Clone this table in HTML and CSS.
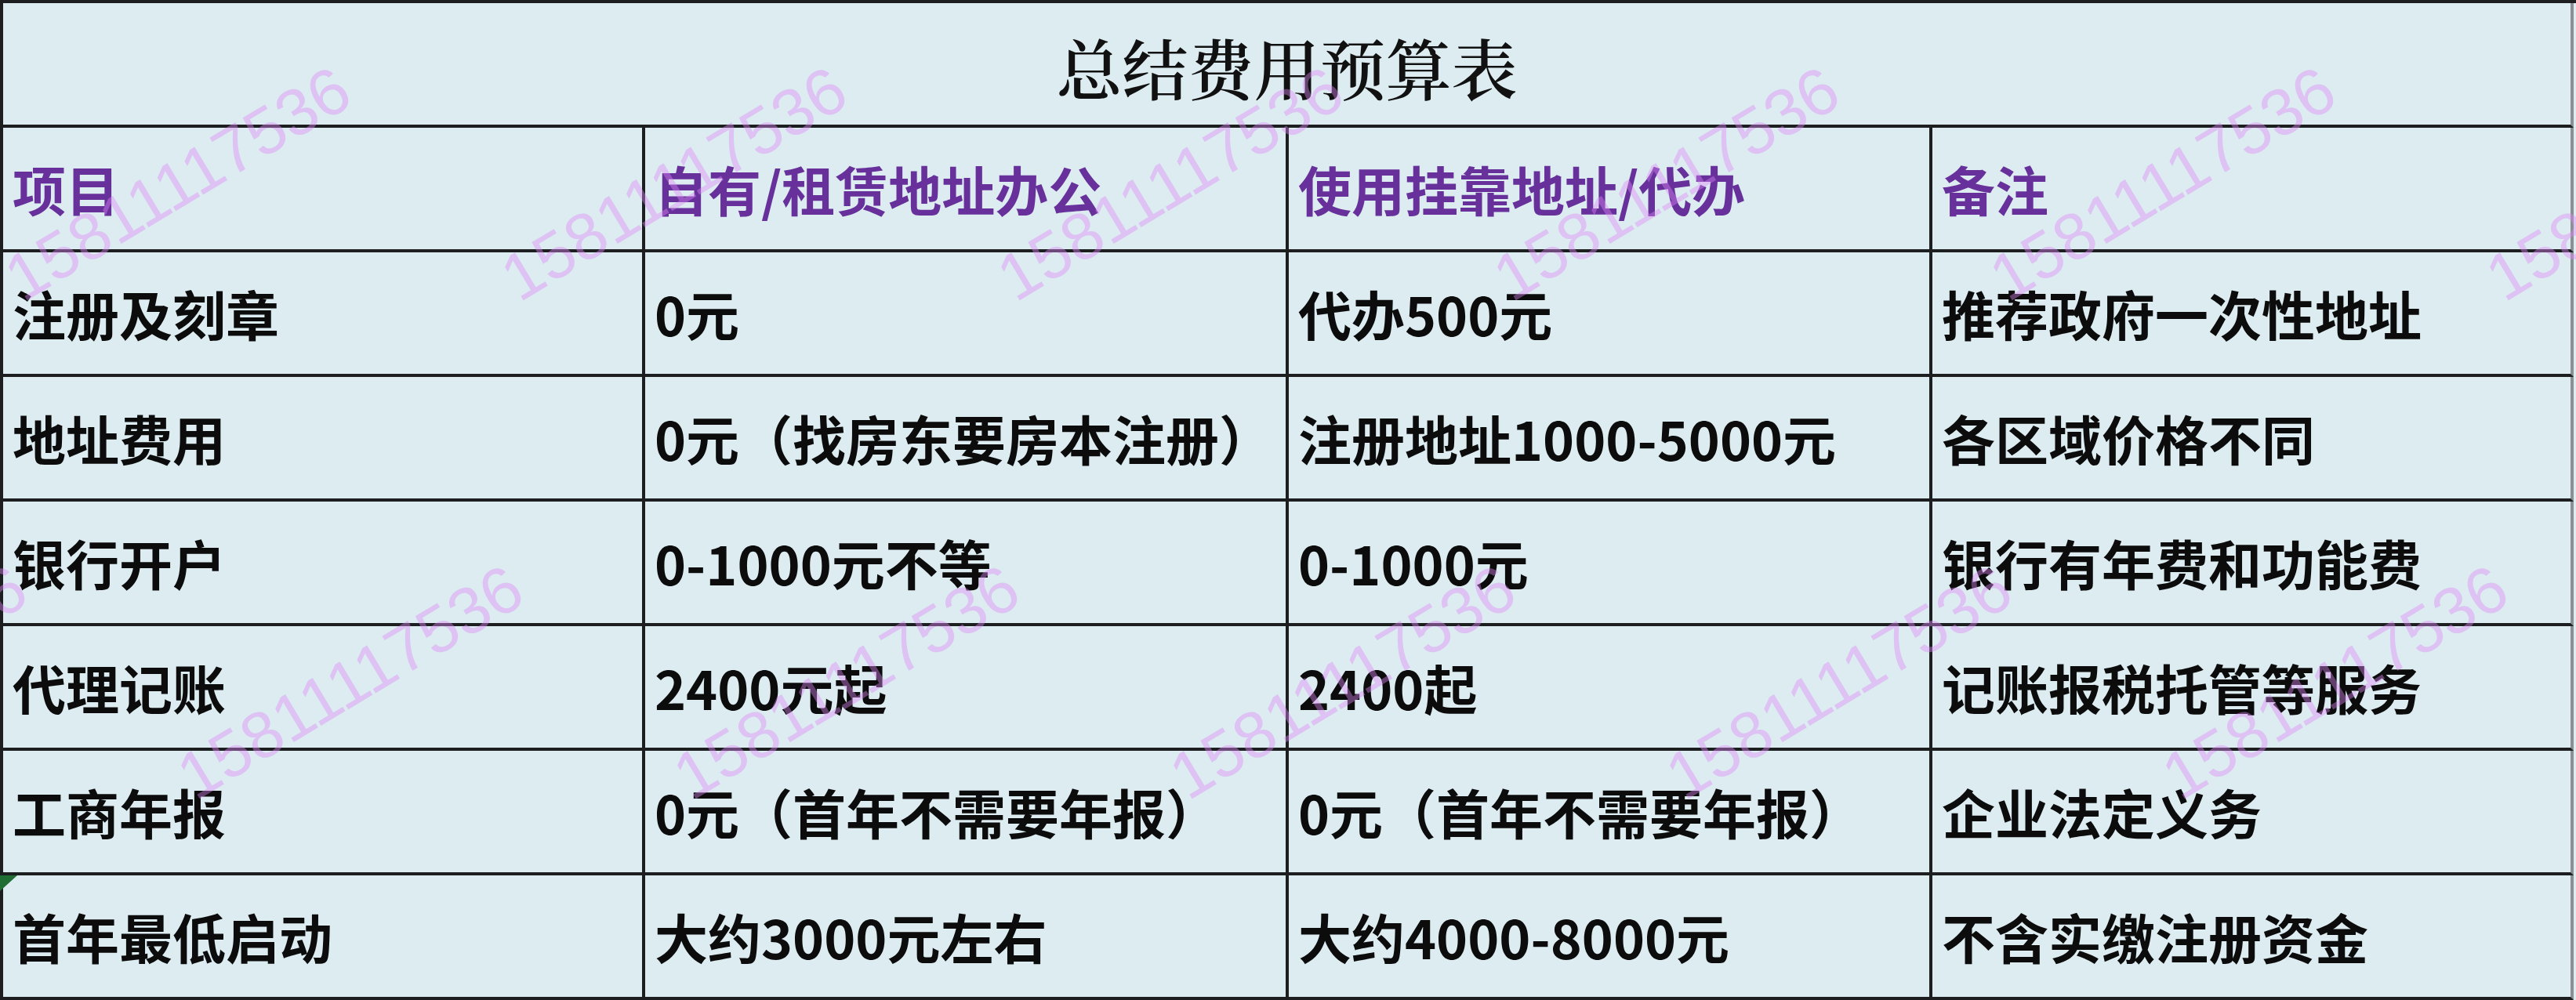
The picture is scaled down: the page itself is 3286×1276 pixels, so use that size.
FILE: index.html
```html
<!DOCTYPE html>
<html lang="zh-CN">
<head>
<meta charset="utf-8">
<title>总结费用预算表</title>
<link rel="stylesheet" href="styles.css">
</head>
<body>
<div class="page">
  <div class="sheet">
    <div class="title">总结费用预算表</div>

    <div class="cell head">项目</div>
    <div class="cell head">自有/租赁地址办公</div>
    <div class="cell head">使用挂靠地址/代办</div>
    <div class="cell head last">备注</div>

    <div class="cell">注册及刻章</div>
    <div class="cell">0元</div>
    <div class="cell">代办500元</div>
    <div class="cell last">推荐政府一次性地址</div>

    <div class="cell">地址费用</div>
    <div class="cell">0元（找房东要房本注册）</div>
    <div class="cell">注册地址1000-5000元</div>
    <div class="cell last">各区域价格不同</div>

    <div class="cell">银行开户</div>
    <div class="cell">0-1000元不等</div>
    <div class="cell">0-1000元</div>
    <div class="cell last">银行有年费和功能费</div>

    <div class="cell">代理记账</div>
    <div class="cell">2400元起</div>
    <div class="cell">2400起</div>
    <div class="cell last">记账报税托管等服务</div>

    <div class="cell">工商年报</div>
    <div class="cell">0元（首年不需要年报）</div>
    <div class="cell">0元（首年不需要年报）</div>
    <div class="cell last">企业法定义务</div>

    <div class="cell flagged">首年最低启动</div>
    <div class="cell">大约3000元左右</div>
    <div class="cell">大约4000-8000元</div>
    <div class="cell last">不含实缴注册资金</div>
  </div>

  <div class="watermarks" aria-hidden="true">
    <div class="wm-row row-a">
      <span class="wm">15811117536</span>
      <span class="wm">15811117536</span>
      <span class="wm">15811117536</span>
      <span class="wm">15811117536</span>
      <span class="wm">15811117536</span>
      <span class="wm">15811117536</span>
    </div>
    <div class="wm-row row-b">
      <span class="wm">15811117536</span>
      <span class="wm">15811117536</span>
      <span class="wm">15811117536</span>
      <span class="wm">15811117536</span>
      <span class="wm">15811117536</span>
      <span class="wm">15811117536</span>
      <span class="wm">15811117536</span>
    </div>
  </div>
</div>
</body>
</html>
```
FILE: styles.css
```css
html, body {
  margin: 0;
  padding: 0;
  background: #dcecf1;
}

.page {
  position: relative;
  width: 3286px;
  height: 1276px;
  overflow: hidden;
  background: #dcecf1;
}

.sheet {
  display: grid;
  grid-template-columns: 819px 821px 821px 818px;
  grid-auto-rows: 159px;
  border-top: 4px solid #1c1e20;
  border-left: 4px solid #1c1e20;
  padding-right: 3px;
  background: #dcecf1;
  font-family: "Noto Sans CJK SC", "Noto Sans CJK JP", sans-serif;
  font-weight: 700;
  font-size: 68px;
  color: #0c0c0c;
}

.title {
  grid-column: 1 / -1;
  display: flex;
  align-items: center;
  justify-content: center;
  box-sizing: border-box;
  padding-top: 6px;
  border-right: 4px solid #8c9094;
  border-bottom: 4px solid #1c1e20;
  font-family: "Noto Serif CJK SC", "Noto Serif CJK JP", "Noto Sans CJK SC", serif;
  font-weight: 600;
  font-size: 84px;
  color: #111;
}

.cell {
  position: relative;
  display: flex;
  align-items: center;
  box-sizing: border-box;
  padding-left: 12px;
  white-space: nowrap;
  border-right: 4px solid #1c1e20;
  border-bottom: 4px solid #1c1e20;
}

.cell.last {
  border-right-color: #8c9094;
}

.cell.head {
  color: #67309a;
}

.cell.flagged::before {
  content: "";
  position: absolute;
  left: -4px;
  top: 0;
  width: 22px;
  height: 20px;
  background: #1f6e33;
  clip-path: polygon(0 0, 100% 0, 0 100%);
}

.watermarks {
  position: absolute;
  inset: 0;
  pointer-events: none;
}

.wm-row {
  position: absolute;
  display: flex;
  height: 100px;
}

.row-a {
  left: -90px;
  top: 184px;
}

.row-b {
  left: -503px;
  top: 820px;
}

.wm {
  flex: 0 0 633px;
  display: flex;
  align-items: center;
  justify-content: center;
  font-family: "Liberation Sans", Arial, sans-serif;
  font-size: 84px;
  line-height: 1;
  color: rgba(222, 136, 246, 0.42);
  transform: rotate(-31deg);
}
```
